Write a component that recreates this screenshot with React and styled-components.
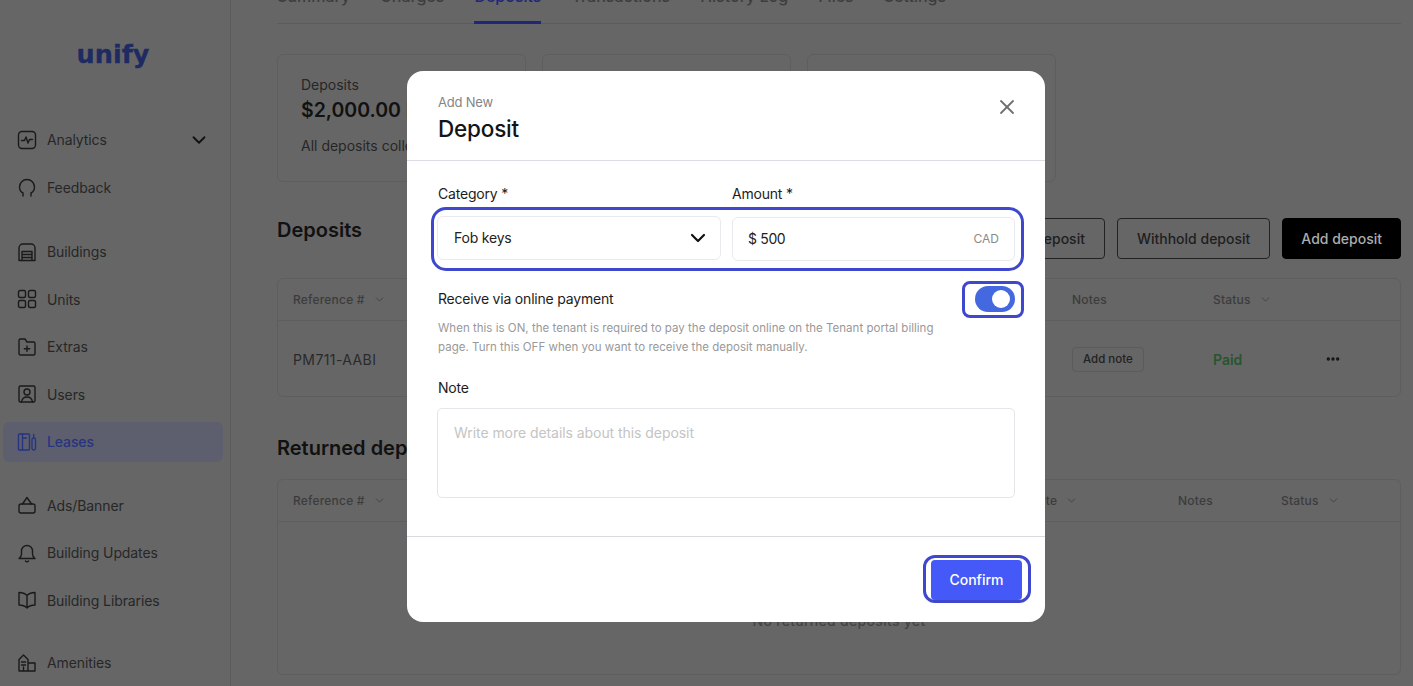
import styled, { createGlobalStyle } from "styled-components";
import { ChevronDown, Ellipsis, X } from "lucide-react";

const GlobalStyle = createGlobalStyle`
  html, body {
    margin: 0;
    padding: 0;
    background: #666;
    font-family: "Inter", "Liberation Sans", sans-serif;
  }
  * {
    box-sizing: border-box;
  }
`;

const Page = styled.div`
  position: relative;
  display: flex;
  width: 1413px;
  height: 686px;
  overflow: hidden;
  background: #666;
  color: #1c1c1c;
`;

/* sidebar */
const Sidebar = styled.aside`
  flex: none;
  width: 231px;
  padding: 0 7px 0 3px;
  border-right: 1px solid #5b5b5b;
`;
const Logo = styled.div`
  height: 119.5px;
  padding: 34px 0 0;
  text-align: center;
  font-family: "DejaVu Sans", sans-serif;
  font-size: 25.5px;
  line-height: 40px;
  font-weight: 700;
  -webkit-text-stroke: 0.3px #1e2a62;
  color: #1e2a62;
`;
const NavGroup = styled.nav`
  display: flex;
  flex-direction: column;
  gap: 7.5px;
  margin-bottom: ${(p) => p.$after}px;
`;
const NavItem = styled.div`
  display: flex;
  align-items: center;
  gap: 10px;
  height: 40px;
  padding: 0 13px 0 14px;
  border-radius: 6px;
  font-size: 14px;
  letter-spacing: -0.1px;
  background: ${(p) => (p.$active ? "#5d5f6e" : "transparent")};
  color: ${(p) => (p.$active ? "#27347f" : "#262626")};
  font-weight: ${(p) => (p.$active ? 500 : 400)};
  svg {
    flex: none;
  }
`;
const NavLabel = styled.span`
  flex: 1;
`;
const Icon = styled.svg.attrs({ viewBox: "0 0 20 20", width: 20, height: 20, fill: "none" })`
  stroke: currentColor;
  stroke-width: 1.4;
  stroke-linecap: round;
  stroke-linejoin: round;
  color: #1a1a1a;
`;
const LeaseIcon = styled(Icon)`
  color: #27347f;
`;

/* main content behind the dialog */
const Main = styled.main`
  flex: 1;
  min-width: 0;
  padding: 0 12px 0 46px;
`;
const Tabs = styled.div`
  display: flex;
  align-items: flex-end;
  gap: 30px;
  height: 24px;
  border-bottom: 1px solid #5c5c5c;
`;
const Tab = styled.div`
  padding-bottom: 15px;
  margin-bottom: -1px;
  font-size: 16px;
  line-height: 20px;
  font-weight: 500;
  white-space: nowrap;
  color: ${(p) => (p.$active ? "#20277a" : "#3d3d3d")};
  border-bottom: 3px solid ${(p) => (p.$active ? "#20277a" : "transparent")};
`;
const Cards = styled.div`
  display: flex;
  gap: 16px;
  margin-top: 30px;
`;
const Card = styled.section`
  width: 249px;
  height: 128px;
  padding: 21px 23px;
  border: 1px solid #5e5e5e;
  border-radius: 6px;
`;
const CardLabel = styled.div`
  font-size: 14px;
  line-height: 18px;
  color: #262626;
`;
const CardValue = styled.div`
  margin-top: 2px;
  font-size: 19.5px;
  line-height: 28px;
  font-weight: 600;
  color: #111;
  white-space: nowrap;
`;
const CardNote = styled.div`
  margin-top: 12px;
  font-size: 14px;
  line-height: 20px;
  color: #262626;
  white-space: nowrap;
`;
const SectionHead = styled.div`
  display: flex;
  align-items: flex-start;
  justify-content: space-between;
  height: 41px;
  margin-top: 36px;
`;
const ReturnedHead = styled.div`
  height: 28px;
  margin-top: 37px;
  padding-top: 2px;
`;
const SectionTitle = styled.h2`
  margin: 0;
  font-size: 20px;
  line-height: 24px;
  font-weight: 600;
  color: #111;
`;
const Actions = styled.div`
  display: flex;
  gap: 12px;
`;
const Button = styled.div`
  display: flex;
  align-items: center;
  height: 41px;
  padding: 0 ${(p) => (p.$solid ? "18px" : "19px")};
  border: 1px solid ${(p) => (p.$solid ? "#000" : "#222")};
  border-radius: 4px;
  font-size: 14px;
  font-weight: 500;
  background: ${(p) => (p.$solid ? "#000" : "transparent")};
  color: ${(p) => (p.$solid ? "#adadad" : "#1e1e1e")};
`;
const Table = styled.div`
  margin-top: ${(p) => p.$top}px;
  height: ${(p) => p.$height}px;
  border: 1px solid #5e5e5e;
  border-radius: 6px;
`;
const Row = styled.div`
  display: grid;
  grid-template-columns: ${(p) => p.$columns};
  align-items: center;
  height: ${(p) => p.$height}px;
  padding-left: 15px;
  border-bottom: ${(p) => (p.$head ? "1px solid #5e5e5e" : "none")};
`;
const HeadCell = styled.div`
  display: flex;
  align-items: center;
  gap: 8px;
  font-size: 12px;
  font-weight: 500;
  color: #3c3c3c;
  letter-spacing: 0.2px;
`;
const Cell = styled.div`
  font-size: 14px;
  letter-spacing: 0.4px;
  color: #2a2a2a;
`;
const PaidCell = styled(Cell)`
  font-weight: 600;
  letter-spacing: 0;
  color: #28552f;
`;
const NoteButton = styled.div`
  display: inline-flex;
  align-items: center;
  height: 25px;
  padding: 0 10px;
  border: 1px solid #5b5b5b;
  border-radius: 4px;
  font-size: 11.5px;
  letter-spacing: 0;
  font-weight: 500;
  color: #222;
`;
const Empty = styled.div`
  padding-top: 90px;
  text-align: center;
  font-size: 14px;
  letter-spacing: 0.3px;
  font-weight: 500;
  color: #444;
`;

/* dialog */
const Modal = styled.div`
  position: absolute;
  left: 407px;
  top: 71px;
  display: flex;
  flex-direction: column;
  width: 638px;
  height: 551px;
  border-radius: 16px;
  background: #fff;
`;
const ModalHead = styled.header`
  display: flex;
  align-items: flex-start;
  justify-content: space-between;
  height: 90px;
  padding: 22px 26px 0 31px;
  border-bottom: 1px solid #dcdce4;
`;
const Eyebrow = styled.div`
  font-size: 13px;
  line-height: 18px;
  color: #858585;
  letter-spacing: -0.2px;
`;
const ModalTitle = styled.h3`
  margin: 4px 0 0;
  font-size: 22.5px;
  line-height: 28px;
  font-weight: 500;
  color: #141414;
  letter-spacing: -0.2px;
`;
const CloseIcon = styled(X)`
  margin-top: 2px;
  color: #6f6f6f;
`;
const ModalBody = styled.div`
  flex: 1;
  padding: 24px 30px 0;
`;
const FieldGrid = styled.div`
  display: grid;
  grid-template-columns: 284px 283px;
  column-gap: 11px;
`;
const Label = styled.label`
  display: block;
  padding-left: 1px;
  font-size: 14px;
  line-height: 18px;
  font-weight: 400;
  color: #1c1c1c;
  letter-spacing: -0.2px;
`;
const AmountLabel = styled(Label)`
  padding-left: 0;
`;
const Field = styled.div`
  display: flex;
  align-items: center;
  justify-content: space-between;
  height: 44px;
  margin-top: ${(p) => (p.$low ? "14px" : "13px")};
  padding: 0 ${(p) => (p.$low ? "15px" : "10px")} 1px ${(p) => (p.$low ? "15px" : "16px")};
  border: 1px solid #eaeaee;
  border-radius: 6px;
  font-size: 14px;
  letter-spacing: ${(p) => (p.$low ? "-0.35px" : "-0.2px")};
  color: #222;
`;
const Suffix = styled.span`
  font-size: 12px;
  letter-spacing: 0;
  color: #8a8a8a;
`;
const ToggleRow = styled.div`
  display: flex;
  align-items: center;
  justify-content: space-between;
  height: 26px;
  margin-top: 25px;
`;
const Toggle = styled.div`
  display: flex;
  align-items: center;
  justify-content: flex-end;
  width: 40px;
  height: 26px;
  padding: 4px 5px;
  border-radius: 13px;
  background: #4468e0;
`;
const Knob = styled.span`
  width: 18px;
  height: 18px;
  border-radius: 50%;
  background: #fff;
`;
const Help = styled.p`
  width: 500px;
  margin: 7px 0 0;
  padding-left: 1px;
  font-size: 11.5px;
  line-height: 19px;
  color: #999;
  letter-spacing: 0.02px;
`;
const NoteLabel = styled(Label)`
  margin-top: 22px;
`;
const NoteBox = styled.div`
  height: 90px;
  margin-top: 11px;
  padding: 15px 16px;
  border: 1px solid #e6e6ea;
  border-radius: 5px;
  font-size: 14px;
  letter-spacing: -0.06px;
  color: #c4c4c4;
`;
const ModalFoot = styled.footer`
  display: flex;
  justify-content: flex-end;
  align-items: center;
  height: 86px;
  padding: 0 23px 0 0;
  border-top: 1px solid #d8dae2;
`;
const ConfirmButton = styled.div`
  display: flex;
  align-items: center;
  justify-content: center;
  width: 91px;
  height: 40px;
  border-radius: 4px;
  background: #4459f8;
  color: #fff;
  font-size: 14px;
  font-weight: 500;
`;
/* hand-drawn highlight marks lying over the dialog */
const Mark = styled.div`
  position: absolute;
  left: ${(p) => p.$x}px;
  top: ${(p) => p.$y}px;
  width: ${(p) => p.$w}px;
  height: ${(p) => p.$h}px;
  border: 3px solid #3f48cc;
  border-radius: ${(p) => p.$r}px;
  pointer-events: none;
`;

const tableOneColumns = "347px 432px 141px 112px 1fr";
const tableTwoColumns = "347px 390px 148px 103px 1fr";
const tabs = ["Summary", "Charges", "Deposits", "Transactions", "History Log", "Files", "Settings"];

function Head({ children, plain }) {
  return (
    <HeadCell>
      {children}
      {!plain && <ChevronDown size={13} strokeWidth={1.5} />}
    </HeadCell>
  );
}

export default function App() {
  return (
    <Page>
      <GlobalStyle />
      <Sidebar>
        <Logo>unify</Logo>
        <NavGroup $after={24.5}>
          <NavItem>
            <Icon>
              <rect x="1.5" y="1.5" width="17" height="17" rx="3.5" />
              <path d="M4.5 10.5h3L9 7l2 6 1.5-3.5h3" />
            </Icon>
            <NavLabel>Analytics</NavLabel>
            <ChevronDown size={22} strokeWidth={2} color="#111" />
          </NavItem>
          <NavItem>
            <Icon>
              <path d="M6 19v-3c-2-1-3.500-3-3.500-6a7.500 7.500 0 0 1 15 0c0 3-1.500 5-3.500 6v3" />
            </Icon>
            Feedback
          </NavItem>
        </NavGroup>
        <NavGroup $after={23.5}>
          <NavItem>
            <Icon>
              <path d="M2 18.500V6a4 4 0 0 1 4-4h8a4 4 0 0 1 4 4v12.500z" />
              <path d="M5 18V9.500h10V18M5 12.500h10M5 15.500h10" />
            </Icon>
            Buildings
          </NavItem>
          <NavItem>
            <Icon>
              <rect x="1.500" y="1.500" width="7" height="7" rx="1.500" />
              <rect x="11.500" y="1.500" width="7" height="7" rx="1.500" />
              <rect x="1.500" y="11.500" width="7" height="7" rx="1.500" />
              <rect x="11.500" y="11.500" width="7" height="7" rx="1.500" />
            </Icon>
            Units
          </NavItem>
          <NavItem>
            <Icon>
              <path d="M2 16.500v-13A1.500 1.500 0 0 1 3.500 2H8l2 3h6.500A1.500 1.500 0 0 1 18 6.500v10a1.500 1.500 0 0 1-1.500 1.500h-13A1.500 1.500 0 0 1 2 16.500z" />
              <path d="M10 9v5.500M7.300 11.700h5.400" />
            </Icon>
            Extras
          </NavItem>
          <NavItem>
            <Icon>
              <rect x="2" y="2" width="16" height="16" rx="1.500" />
              <circle cx="10" cy="8" r="3" />
              <path d="M4.500 18c.5-3.500 2.500-5 5.500-5s5 1.500 5.500 5" />
            </Icon>
            Users
          </NavItem>
          <NavItem $active>
            <LeaseIcon>
              <rect x="1.500" y="2" width="11" height="16" rx="1" />
              <path d="M5.500 2v16M5.500 6h4" />
              <rect x="15" y="6" width="3.500" height="12" rx="1.700" />
              <path d="M16.700 2.500V6" />
            </LeaseIcon>
            Leases
          </NavItem>
        </NavGroup>
        <NavGroup $after={22.5}>
          <NavItem>
            <Icon>
              <rect x="2" y="9" width="16" height="9" rx="2" />
              <path d="M5.500 9L10 2.500 14.500 9" />
            </Icon>
            Ads/Banner
          </NavItem>
          <NavItem>
            <Icon>
              <path d="M2 15.500c1.500-1 2.500-2 2.500-4.500V8a5.500 5.500 0 0 1 11 0v3c0 2.500 1 3.500 2.500 4.500z" />
              <path d="M8.500 18c.8.800 2.200.800 3 0" />
            </Icon>
            Building Updates
          </NavItem>
          <NavItem>
            <Icon>
              <path d="M10 5.500C8 3.500 5 2.500 2 2.500v12.500c3 0 6 1 8 3 2-2 5-3 8-3V2.500c-3 0-6 1-8 3zM10 5.500V18" />
            </Icon>
            Building Libraries
          </NavItem>
        </NavGroup>
        <NavGroup $after={0}>
          <NavItem>
            <Icon>
              <path d="M2 18V6.500L6.500 2 11 6.500V18zM11 10h7v8h-7M6.500 14v4M4.500 9h4M4.500 12h4" />
            </Icon>
            Amenities
          </NavItem>
        </NavGroup>
      </Sidebar>

      <Main>
        <Tabs>
          {tabs.map((t) => (
            <Tab key={t} $active={t === "Deposits"}>
              {t}
            </Tab>
          ))}
        </Tabs>
        <Cards>
          <Card>
            <CardLabel>Deposits</CardLabel>
            <CardValue>$2,000.00 Paid</CardValue>
            <CardNote>All deposits collected</CardNote>
          </Card>
          <Card />
          <Card />
        </Cards>
        <SectionHead>
          <SectionTitle>Deposits</SectionTitle>
          <Actions>
            <Button>Return deposit</Button>
            <Button>Withhold deposit</Button>
            <Button $solid>Add deposit</Button>
          </Actions>
        </SectionHead>
        <Table $top={19} $height={119}>
          <Row $head $height={42} $columns={tableOneColumns}>
            <Head>Reference #</Head>
            <Head>Category</Head>
            <Head plain>Notes</Head>
            <Head>Status</Head>
          </Row>
          <Row $height={76} $columns={tableOneColumns}>
            <Cell>PM711-AABI</Cell>
            <Cell>Security</Cell>
            <Cell>
              <NoteButton>Add note</NoteButton>
            </Cell>
            <PaidCell>Paid</PaidCell>
            <Ellipsis size={16} strokeWidth={3} color="#111" />
          </Row>
        </Table>
        <ReturnedHead>
          <SectionTitle>Returned deposits</SectionTitle>
        </ReturnedHead>
        <Table $top={17} $height={196}>
          <Row $head $height={42} $columns={tableTwoColumns}>
            <Head>Reference #</Head>
            <Head>Category</Head>
            <Head>Date</Head>
            <Head plain>Notes</Head>
            <Head>Status</Head>
          </Row>
          <Empty>No returned deposits yet</Empty>
        </Table>
      </Main>

      <Modal>
        <ModalHead>
          <div>
            <Eyebrow>Add New</Eyebrow>
            <ModalTitle>Deposit</ModalTitle>
          </div>
          <CloseIcon size={24} strokeWidth={1.8} />
        </ModalHead>
        <ModalBody>
          <FieldGrid>
            <div>
              <Label>Category *</Label>
              <Field>
                Fob keys
                <ChevronDown size={24} strokeWidth={2.2} color="#111" />
              </Field>
            </div>
            <div>
              <AmountLabel>Amount *</AmountLabel>
              <Field $low>
                $ 500
                <Suffix>CAD</Suffix>
              </Field>
            </div>
          </FieldGrid>
          <ToggleRow>
            <Label>Receive via online payment</Label>
            <Toggle>
              <Knob />
            </Toggle>
          </ToggleRow>
          <Help>
            When this is ON, the tenant is required to pay the deposit online on the Tenant portal billing page. Turn
            this OFF when you want to receive the deposit manually.
          </Help>
          <NoteLabel>Note</NoteLabel>
          <NoteBox>Write more details about this deposit</NoteBox>
        </ModalBody>
        <ModalFoot>
          <ConfirmButton>Confirm</ConfirmButton>
        </ModalFoot>
      </Modal>

      <Mark $x={431} $y={207} $w={593} $h={64} $r={15} />
      <Mark $x={962} $y={281} $w={62} $h={37} $r={8} />
      <Mark $x={923} $y={555} $w={108} $h={48} $r={12} />
    </Page>
  );
}
